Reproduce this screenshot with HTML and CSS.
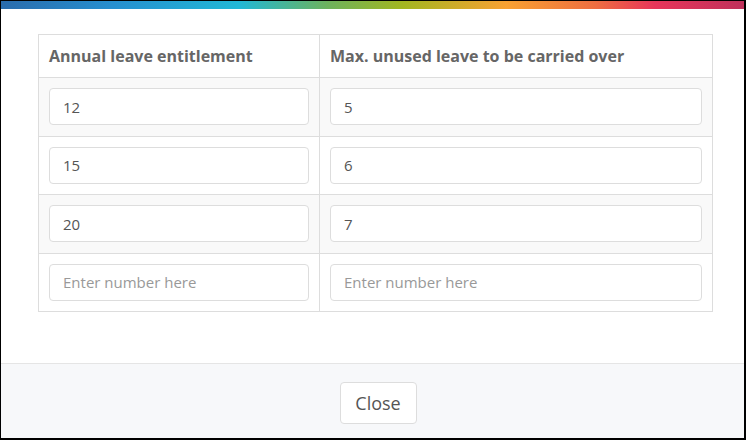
FILE: index.html
```html
<!DOCTYPE html>
<html>
<head>
<meta charset="utf-8">
<link rel="stylesheet" href="styles.css">
</head>
<body>
<div class="modal">
  <div class="bar"></div>
  <div class="body">
    <table class="grid">
      <thead>
        <tr><th class="c1">Annual leave entitlement</th><th class="c2">Max. unused leave to be carried over</th></tr>
      </thead>
      <tbody>
        <tr class="odd"><td><input class="field" value="12"></td><td><input class="field" value="5"></td></tr>
        <tr><td><input class="field" value="15"></td><td><input class="field" value="6"></td></tr>
        <tr class="odd"><td><input class="field" value="20"></td><td><input class="field" value="7"></td></tr>
        <tr><td><input class="field" placeholder="Enter number here"></td><td><input class="field" placeholder="Enter number here"></td></tr>
      </tbody>
    </table>
  </div>
  <div class="footer">
    <button class="btn">Close</button>
  </div>
</div>
</body>
</html>
```
FILE: styles.css
```css
html, body { margin: 0; padding: 0; background: #fff; }
.modal {
  width: 746px; height: 440px; box-sizing: border-box;
  border-style: solid; border-color: #000; border-width: 1px 2px 2px 1px;
  display: flex; flex-direction: column;
  font-family: "Open Sans", "Noto Sans", sans-serif;
}
.bar {
  height: 8px; flex: none;
  background: linear-gradient(90deg, #2a6cac 0%, #268fcf 15%, #21b8d6 32%, #6db25d 44%, #a2b620 54%, #f8a132 68%, #ee6e41 80%, #e7355a 88%, #bf315b 100%);
}
.body { flex: 1; padding: 25px 31px 0 37px; }
.grid { border-collapse: collapse; width: 675px; table-layout: fixed; }
.grid th, .grid td { border: 1px solid #ddd; padding: 10px 10px 10.5px; text-align: left; }
.grid th { font-weight: 700; font-size: 16px; color: #666; height: 22px; padding: 10px 10px 10px; line-height: 22px; }
.c1 { width: 260px; }
.odd td { background: #f9f9f9; }
.field {
  display: block; width: 100%; box-sizing: border-box; height: 37px;
  border: 1px solid #ddd; border-radius: 4px; background: #fff;
  padding: 0 13px; font-family: inherit; font-size: 15px; color: #555; outline: none;
}
.field::placeholder { color: #999; }
.footer {
  flex: none; height: 75px; box-sizing: border-box;
  border-top: 1px solid #e5e5e5; background: #f7f8fa;
  display: flex; justify-content: center; padding: 18px 0 0 11px; align-items: flex-start;
}
.btn {
  height: 42px; width: 77px; background: #fff; border: 1px solid #ddd; border-radius: 4px;
  font-family: inherit; font-size: 18px; color: #555; padding: 0;
}
```
